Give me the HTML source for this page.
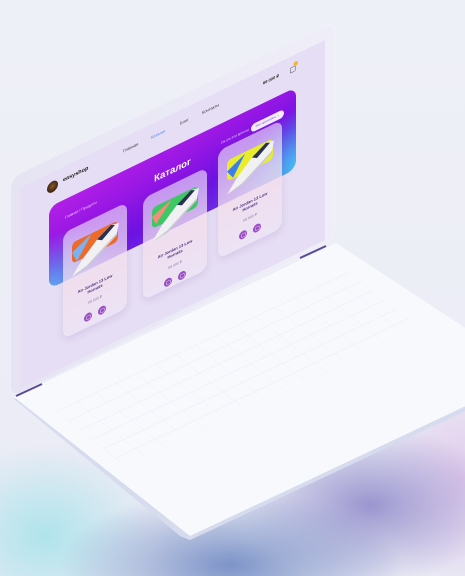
<!DOCTYPE html>
<html><head><meta charset="utf-8">
<style>
*{margin:0;padding:0;box-sizing:border-box}
html,body{width:465px;height:576px;overflow:hidden}
body{position:relative;font-family:"Liberation Sans",sans-serif;
background:
radial-gradient(ellipse 170px 75px at 230px 565px,rgba(125,148,200,1),rgba(125,148,200,0) 100%),
radial-gradient(ellipse 130px 80px at 370px 505px,rgba(150,145,205,.95),rgba(150,145,205,0) 100%),
radial-gradient(ellipse 110px 90px at 45px 535px,rgba(175,228,236,1),rgba(175,228,236,0) 100%),
radial-gradient(ellipse 80px 110px at 460px 480px,rgba(225,200,235,.95),rgba(225,200,235,0) 100%),
linear-gradient(180deg,#eef0f7 0%,#ecedf6 60%,#e9eaf4 100%);}
.abs{position:absolute}
svg.full{position:absolute;left:0;top:0}
.scr{position:absolute;left:0;top:0;width:610px;height:400px;transform-origin:0 0;
transform:matrix(0.5,-0.2425,0,0.5,20,188);background:#e6def4;overflow:hidden}
.frame{position:absolute;left:0;top:0;width:650px;height:440px;transform-origin:0 0;
transform:matrix(0.5,-0.2425,0,0.5,10,178);background:linear-gradient(90deg,#e6e4f3,#efeef8);border-radius:22px;box-shadow:0 0 0 1px #f6f5fb inset}
.nav{position:absolute;top:22px;font-size:8px;color:#333}
.banner{position:absolute;left:58px;top:66px;width:494px;height:164px;border-radius:18px;
background:
radial-gradient(ellipse 160px 120px at 520px 160px,#3fd6f2 0%,rgba(63,214,242,0) 100%),
radial-gradient(ellipse 160px 110px at 0px 170px,#5fb0f2 0%,rgba(95,176,242,0) 100%),
linear-gradient(170deg,#b21fe6 0%,#9416e4 35%,#6d12e2 65%,#6a38ea 100%)}
.card{position:absolute;width:128px;height:212px;border-radius:16px;
background:linear-gradient(180deg,rgba(238,228,250,.62) 0%,rgba(242,222,236,.8) 55%,rgba(236,228,246,.9) 100%);
box-shadow:0 6px 14px rgba(120,80,170,.15)}
.img{position:absolute;left:18px;top:28px;width:92px;height:42px;border-radius:9px;overflow:hidden}
.shoe{position:absolute;left:8px;top:12px}
.t{position:absolute;left:0;width:100%;text-align:center;top:128px;font-size:8px;font-weight:bold;color:#4a2b7e;line-height:10px}
.p{position:absolute;left:0;width:100%;text-align:center;top:160px;font-size:7px;color:#8e7aa6}
.b{position:absolute;top:184px;width:16px;height:16px;border-radius:50%;background:#9a4cc4}
.b:after{content:"";position:absolute;left:5px;top:5px;width:6px;height:6px;border:1px solid #e8d6f2;border-radius:1px}
</style></head><body>

<svg class="full" width="465" height="576">
 <polygon points="14,399 336,244 470,332 470,409 190,540 180,536" fill="#d6dcee"/>
 <polygon points="14,397 336,243 470,331 470,404 190,536" fill="#f8f9fd"/>
</svg>

<div class="abs" style="left:0;top:0;width:640px;height:300px;transform-origin:0 0;transform:matrix(0.498,-0.2375,0.587,0.467,14,397)">
 <div style="position:absolute;left:30px;top:46px;width:590px;height:120px;
 background-image:linear-gradient(90deg,rgba(215,220,236,.6) 1px,transparent 1px),linear-gradient(180deg,rgba(215,220,236,.6) 1px,transparent 1px);
 background-size:40px 20px;opacity:.45"></div>
</div>

<div class="frame"></div>
<div class="scr">
 <div class="abs" style="left:54px;top:18px;width:22px;height:22px;border-radius:50%;background:radial-gradient(circle at 50% 45%,#8a5a2a 0%,#3a2212 70%)"></div>
 <div class="abs" style="left:86px;top:20px;font-size:11px;font-weight:bold;color:#222">easyshop</div>
 <div class="nav" style="left:206px">Главная</div>
 <div class="nav" style="left:262px;color:#4a86f0">Каталог</div>
 <div class="nav" style="left:320px">Блог</div>
 <div class="nav" style="left:364px">Контакты</div>
 <div class="abs" style="left:486px;top:22px;font-size:8px;font-weight:bold;color:#222">68 000 ₽</div>
 <div class="abs" style="left:540px;top:22px;width:11px;height:11px;border:1.5px solid #555;border-radius:2px"></div>
 <div class="abs" style="left:547px;top:14px;width:9px;height:9px;border-radius:50%;background:#f2b630"></div>

 <div class="banner">
  <div class="abs" style="left:32px;top:34px;font-size:7px;color:rgba(255,255,255,.8)">Главная / Продукты</div>
  <div class="abs" style="left:0;width:494px;text-align:center;top:36px;font-size:19px;font-weight:bold;color:#fff">Каталог</div>
  <div class="abs" style="left:344px;top:36px;font-size:7px;color:rgba(255,255,255,.8)">Ох уж эти кроссы</div>
  <div class="abs" style="left:404px;top:32px;width:66px;height:16px;border-radius:8px;background:#f3ecfb;font-size:6px;color:#7a3fb0;text-align:center;line-height:16px">Все кроссовки →</div>
 </div>

 <div class="card" style="left:86px;top:132px">
  <div class="img" style="background:#ec6a2a"><svg width="92" height="42"><polygon points="0,20 40,0 10,42" fill="#7fb0ee"/></svg></div>
  <svg class="shoe" width="112" height="90"><path d="M10 84 L30 60 L60 34 L88 18 L104 22 L100 40 L70 58 L40 76 Z" fill="#f1f1f4"/><path d="M60 34 L88 18 L96 22 L70 40 Z" fill="#2a3050"/><path d="M10 84 L40 76 L70 58 L100 40 L100 44 L42 80 Z" fill="#c8cad4"/></svg>
  <div class="t">Air Jordan 13 Low<br>Hornets</div>
  <div class="p">58 000 ₽</div>
  <div class="b" style="left:42px"></div><div class="b" style="left:70px"></div>
 </div>
 <div class="card" style="left:246px;top:140px;height:204px">
  <div class="img" style="background:#3fc766"><svg width="92" height="42"><polygon points="0,18 40,2 8,36" fill="#f0907a"/></svg></div>
  <svg class="shoe" width="112" height="90"><path d="M10 84 L30 60 L60 34 L88 18 L104 22 L100 40 L70 58 L40 76 Z" fill="#f1f1f4"/><path d="M60 34 L88 18 L96 22 L70 40 Z" fill="#2a3050"/><path d="M10 84 L40 76 L70 58 L100 40 L100 44 L42 80 Z" fill="#c8cad4"/></svg>
  <div class="t">Air Jordan 13 Low<br>Hornets</div>
  <div class="p">58 000 ₽</div>
  <div class="b" style="left:42px"></div><div class="b" style="left:70px"></div>
 </div>
 <div class="card" style="left:396px;top:118px;height:216px">
  <div class="img" style="background:#e8ec2a"><svg width="92" height="42"><polygon points="0,22 36,4 12,40" fill="#3c7ee8"/></svg></div>
  <svg class="shoe" width="112" height="90"><path d="M10 84 L30 60 L60 34 L88 18 L104 22 L100 40 L70 58 L40 76 Z" fill="#f1f1f4"/><path d="M60 34 L88 18 L96 22 L70 40 Z" fill="#2a3050"/><path d="M10 84 L40 76 L70 58 L100 40 L100 44 L42 80 Z" fill="#c8cad4"/></svg>
  <div class="t">Air Jordan 13 Low<br>Hornets</div>
  <div class="p">58 000 ₽</div>
  <div class="b" style="left:42px"></div><div class="b" style="left:70px"></div>
 </div>
</div>

<svg class="full" width="465" height="576">
 <line x1="16" y1="396" x2="42" y2="384" stroke="#5a4a9a" stroke-width="2"/>
 <line x1="300" y1="258" x2="326" y2="246" stroke="#5a4a9a" stroke-width="2"/>
</svg>
</body></html>
